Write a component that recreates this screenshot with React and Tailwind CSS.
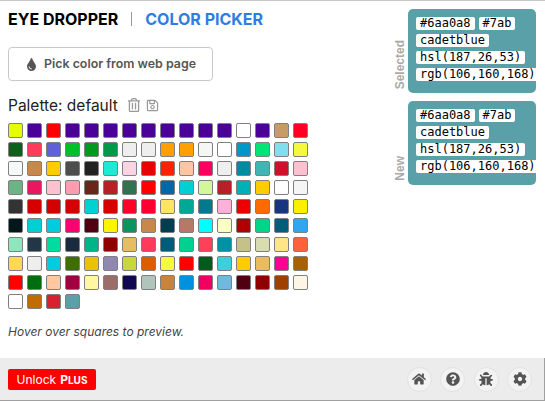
import React from "react";
import { FaTint, FaRegTrashAlt, FaRegSave, FaHome, FaQuestionCircle, FaBug, FaCog } from "react-icons/fa";

const PURPLE = "#4b0098";
const PALETTE = [
  "#e6ff00", PURPLE, "#ff0000", PURPLE, PURPLE, PURPLE, PURPLE, PURPLE, PURPLE, PURPLE, PURPLE, PURPLE, "#ffffff", PURPLE, "#c89a66", "#ff0022",
  "#0f5f1c", "#ff3b5c", "#6060d8", "#00c02a", "#009a1c", "#009a4a", "#eeeeee", "#eeeeee", "#ffa000", "#ffa000", "#f5f7f5", "#ffffff", "#0098c8", "#00e676", "#80dfef", "#f4f940",
  "#f7f9f9", "#c8874c", "#ffcc00", "#4d4d4d", "#222222", "#1de9d6", "#fad4e3", "#e60000", "#ff2200", "#ffc5a3", "#ff0060", "#eeeeee", "#008ba3", "#40b5b5", "#d01028", "#ffc0d0",
  "#6db386", "#e91660", "#ffc0d0", "#ff9cb0", "#6a2618", "#b82028", "#2f734f", "#ff0000", "#0068a8", "#00d0d4", "#d4f79c", "#b82028", "#00b0b8", "#ffcc00", "#ffffff", "#f5f5f5",
  "#333333", "#d50000", "#d50000", "#d50000", "#00d2d3", "#d50000", "#ff0028", "#ff0030", "#ffe566", "#00a896", "#007a8c", "#ffb0d8", "#ee0000", "#ff6a00", "#183580", "#fcf000",
  "#04181c", "#00d0d4", "#00cce0", "#ff0070", "#500010", "#fcf400", "#0a9460", "#c8874c", "#023e52", "#b87868", "#00ffff", "#fbffc4", "#b00000", "#00d488", "#005e7a", "#30a5f0",
  "#8ce8bc", "#233648", "#00dca0", "#1c2a40", "#00b48a", "#900000", "#e8bc60", "#ff3b5c", "#005c7a", "#00d090", "#ff4058", "#0090a8", "#c4c288", "#d8dcae", "#ffe488", "#ff6040",
  "#ffd858", "#eeeeee", "#00cce0", "#3f6e00", "#e8c400", "#9088b0", "#c8d83c", "#e05c00", "#f4fa40", "#ff0000", "#005c1c", "#3cd0dc", "#ffcc00", "#e8bc60", "#ff0090", "#a86000",
  "#ff0000", "#006e10", "#ffc8a0", "#a00040", "#fff8a0", "#9c6c68", "#100850", "#b0c4bc", "#c8843c", "#0090e0", "#f00060", "#70b8e0", "#500010", "#900000", "#a04000", "#fdf5e6",
  "#ffffff", "#c06c00", "#d82030", "#5aa0a8",
];

const Pill = ({ children }) => (
  <span className="h-[13px] bg-white rounded-[2px] px-1 text-[12px] leading-[13px] whitespace-nowrap text-black">{children}</span>
);

const ColorPanel = ({ label }) => (
  <div className="flex items-end">
    <div className="w-[28px] flex justify-end pr-[1px] pb-[4px]">
      <span className="[writing-mode:vertical-rl] rotate-180 font-['Liberation_Sans',sans-serif] text-[12px] leading-[14px] font-bold text-[#a9a9a9]">{label}</span>
    </div>
    <div className="w-[128px] h-[84px] bg-[#5aa0a8] rounded-[5px] pl-2 pt-2 overflow-hidden flex flex-col gap-1 font-['DejaVu_Sans_Mono',monospace]">
      <div className="flex gap-1">
        <Pill>#6aa0a8</Pill>
        <Pill>#7ab</Pill>
      </div>
      <div className="flex"><Pill>cadetblue</Pill></div>
      <div className="flex"><Pill>hsl(187,26,53)</Pill></div>
      <div className="flex"><Pill>rgb(106,160,168)</Pill></div>
    </div>
  </div>
);

const RoundIcon = ({ children }) => (
  <button className="w-[25px] h-[25px] rounded-full bg-[#f3f3f3] border border-[#e2e2e2] flex items-center justify-center text-[#555555] text-[14px]">
    {children}
  </button>
);

const App = () => {
  return (
    <div className="w-[545px] h-[401px] flex flex-col bg-white font-['Inter',sans-serif] border-t border-[#c8c8c8] overflow-hidden">
      <div className="flex-1 flex justify-between pr-[9px]">
        <div className="pl-2 pt-[3px]">
          <div className="flex items-center h-[30px] text-[16px] font-bold">
            <span className="text-black">EYE DROPPER</span>
            <span className="w-px h-[14px] bg-[#999999] ml-[13px] mr-[13px]"></span>
            <span className="text-[#2f7de1]">COLOR PICKER</span>
          </div>
          <button className="mt-[13px] w-[205px] h-[34px] border border-[#c8c8c8] rounded-[4px] flex items-center justify-center gap-[6px] text-[12.4px] font-semibold text-[#555555]">
            <FaTint className="text-[13px]" />
            Pick color from web page
          </button>
          <div className="mt-[15px] flex items-center h-[20px] text-[15.5px] text-[#222222]">
            Palette: default
            <FaRegTrashAlt className="ml-[9px] -mt-[2px] text-[14px] text-[#999999]" />
            <FaRegSave className="ml-[5px] -mt-[2px] text-[13px] text-[#999999]" />
          </div>
          <div className="mt-[7px] grid grid-cols-[repeat(16,15px)] gap-1">
            {PALETTE.map((color, i) => (
              <div key={i} className="w-[15px] h-[15px] rounded-[2px] border border-[#808080]" style={{ backgroundColor: color }}></div>
            ))}
          </div>
          <p className="mt-[14px] text-[12px] italic text-[#444444]">Hover over squares to preview.</p>
        </div>
        <div className="flex flex-col gap-2 pt-2">
          <ColorPanel label="Selected" />
          <ColorPanel label="New" />
        </div>
      </div>
      <div className="h-[43px] bg-[#ececec] border-b border-r border-[#a0a0a0] flex items-center justify-between pl-2 pr-[12px]">
        <button className="h-[21px] w-[88px] mt-[1px] bg-[#ff0000] rounded-[2px] text-white text-[12px] flex items-center justify-center gap-1">
          Unlock
          <span className="font-bold">P<span className="text-[10px]">LUS</span></span>
        </button>
        <div className="flex gap-[8.4px]">
          <RoundIcon><FaHome /></RoundIcon>
          <RoundIcon><FaQuestionCircle /></RoundIcon>
          <RoundIcon><FaBug /></RoundIcon>
          <RoundIcon><FaCog /></RoundIcon>
        </div>
      </div>
    </div>
  );
};

export default App;
